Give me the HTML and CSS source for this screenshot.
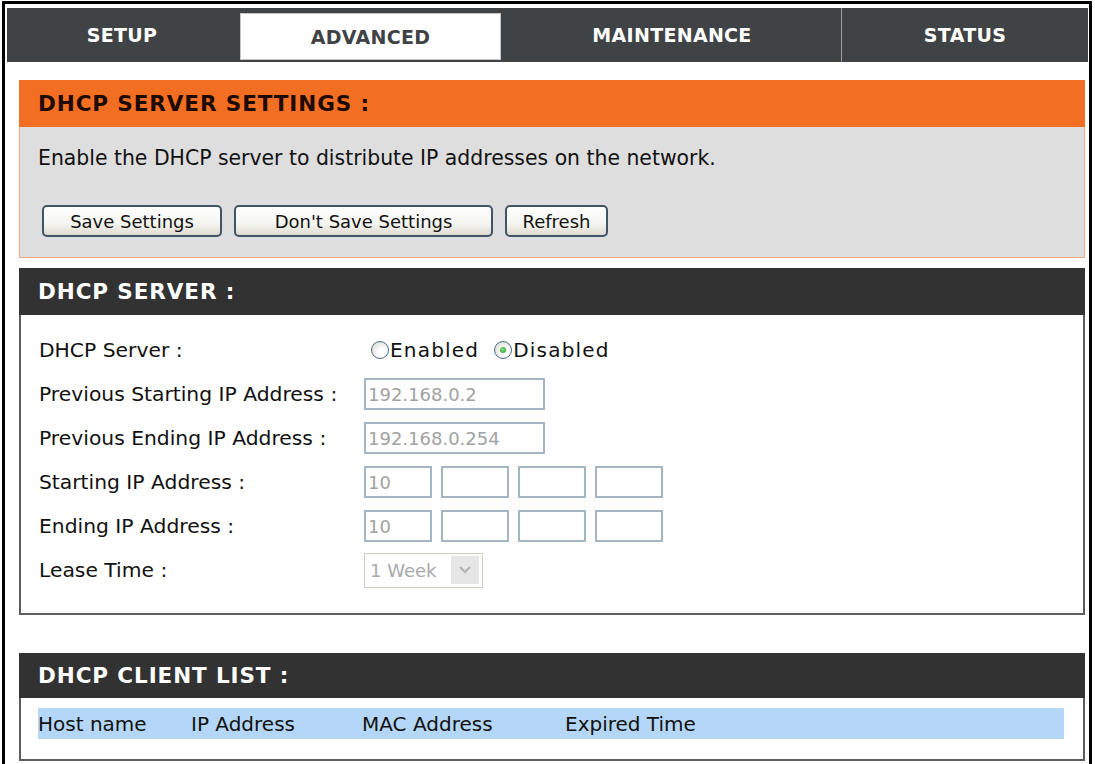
FILE: index.html
```html
<!DOCTYPE html>
<html lang="en">
<head>
    <meta charset="UTF-8">
    <title>DHCP Server</title>
    <link rel="stylesheet" href="styles.css">
</head>
<body>

    <div class="frame">
        <div class="tabs">
            <div class="tab">SETUP</div>
            <div class="tab active">ADVANCED</div>
            <div class="tab">MAINTENANCE</div>
            <div class="tab tab-last">STATUS</div>
        </div>

        <div class="box box-orange">
            <div class="box-head">DHCP SERVER SETTINGS :</div>
            <div class="box-body">
                <p class="intro">Enable the DHCP server to distribute IP addresses on the network.</p>
                <div class="buttons">
                    <button class="btn btn-save">Save Settings</button>
                    <button class="btn btn-cancel">Don't Save Settings</button>
                    <button class="btn btn-refresh">Refresh</button>
                </div>
            </div>
        </div>

        <div class="box box-dark">
            <div class="box-head">DHCP SERVER :</div>
            <div class="box-body form">
                <div class="label">DHCP Server :</div>
                <div class="field">
                    <span class="radio"></span><span class="radio-label">Enabled</span>
                    <span class="radio checked"></span><span class="radio-label">Disabled</span>
                </div>

                <div class="label">Previous Starting IP Address :</div>
                <div class="field"><input class="text wide" type="text" value="192.168.0.2" disabled></div>

                <div class="label">Previous Ending IP Address :</div>
                <div class="field"><input class="text wide" type="text" value="192.168.0.254" disabled></div>

                <div class="label">Starting IP Address :</div>
                <div class="field octets">
                    <input class="text" type="text" value="10" disabled>
                    <input class="text" type="text" value="" disabled>
                    <input class="text" type="text" value="" disabled>
                    <input class="text" type="text" value="" disabled>
                </div>

                <div class="label">Ending IP Address :</div>
                <div class="field octets">
                    <input class="text" type="text" value="10" disabled>
                    <input class="text" type="text" value="" disabled>
                    <input class="text" type="text" value="" disabled>
                    <input class="text" type="text" value="" disabled>
                </div>

                <div class="label">Lease Time :</div>
                <div class="field">
                    <div class="select">
                        <span class="select-text">1 Week</span>
                        <span class="select-arrow">
                            <svg width="14" height="10" viewBox="0 0 14 10"><path d="M2 2 L7 7 L12 2" fill="none" stroke="#b4b4b4" stroke-width="2.2"/></svg>
                        </span>
                    </div>
                </div>
            </div>
        </div>

        <div class="box box-dark clients">
            <div class="box-head">DHCP CLIENT LIST :</div>
            <div class="box-body">
                <div class="client-row">
                    <span class="col-host">Host name</span>
                    <span class="col-ip">IP Address</span>
                    <span class="col-mac">MAC Address</span>
                    <span class="col-time">Expired Time</span>
                </div>
            </div>
        </div>
    </div>

</body>
</html>
```

FILE: styles.css
```css
:root {
    --tab-bg: #404345;
    --orange: #f26e22;
    --peach: #eaa982;
    --panel-gray: #dedede;
    --dark-head: #323232;
    --box-border: #5e5e5e;
    --row-blue: #b5d7f7;
    --input-border: #a4b5c5;
}
body {
    margin: 0;
    background: #fff;
    font-family: "DejaVu Sans", Verdana, sans-serif;
    font-size: 20px;
    color: #111;
}
.frame {
    width: 1090px;
    box-sizing: border-box;
    margin: 1px 0 0 2px;
    border: 3px solid #000;
    padding: 4px 1px 12px 2px;
}

/* top navigation */
.tabs {
    display: grid;
    grid-template-columns: 230px 266px 338px 1fr;
    height: 54px;
    background: var(--tab-bg);
}
.tab {
    display: flex;
    align-items: center;
    justify-content: center;
    color: #fff;
    font-size: 19px;
    font-weight: bold;
    letter-spacing: 0.3px;
}
.tab.active {
    margin: 5px 2px 2px 3px;
    background: #fff;
    border: 1px solid #c4c4c4;
    color: var(--tab-bg);
}
.tab-last {
    border-left: 1px solid #9a9c9d;
}

/* section boxes */
.box {
    margin: 0 3px 0 12px;
}
.box-head {
    height: 47px;
    line-height: 47px;
    padding-left: 19px;
    font-size: 21.5px;
    font-weight: bold;
    letter-spacing: 0.9px;
}
.box-orange {
    margin-top: 18px;
}
.box-orange .box-head {
    background: var(--orange);
    color: #1e0a00;
}
.box-orange .box-body {
    background: var(--panel-gray);
    border: 1px solid var(--peach);
    border-top: none;
    padding: 19px 18px 20px 18px;
}
.intro {
    margin: 0;
    line-height: 24px;
    font-size: 20.4px;
}
.buttons {
    display: flex;
    gap: 12px;
    margin: 35px 0 0 4px;
}
.btn {
    height: 32px;
    padding: 0;
    font-family: "DejaVu Sans", Verdana, sans-serif;
    font-size: 18px;
    color: #111;
    background: linear-gradient(#ffffff, #f4f4f0 60%, #dedbd0);
    border: 2px solid #3f5467;
    border-radius: 5px;
}
.btn-save { width: 180px; }
.btn-cancel { width: 259px; }
.btn-refresh { width: 103px; }

.box-dark {
    margin-top: 10px;
}
.box-dark .box-head {
    background: var(--dark-head);
    color: #fff;
}
.box-dark .box-body {
    border: 2px solid var(--box-border);
    border-top: none;
}

/* server form */
.form {
    display: grid;
    grid-template-columns: 325px 1fr;
    grid-auto-rows: 44px;
    align-items: center;
    padding: 13px 18px 21px 18px;
}
.label {
    font-size: 20.3px;
}
.field {
    display: flex;
    align-items: center;
}
.radio {
    flex: 0 0 18px;
    box-sizing: border-box;
    width: 18px;
    height: 18px;
    border: 1.5px solid #4a6d8e;
    border-radius: 50%;
    background: radial-gradient(circle at 65% 65%, #ffffff 25%, #d6d4ca 95%);
    margin: 0 0 0 7px;
    position: relative;
}
.radio.checked::after {
    content: "";
    position: absolute;
    left: 4.5px;
    top: 4.5px;
    width: 6px;
    height: 6px;
    border-radius: 50%;
    background: radial-gradient(circle at 40% 40%, #7ee07e, #1f9a1f);
}
.radio-label {
    letter-spacing: 1.2px;
    margin: 0 8px 0 1px;
}
.text {
    box-sizing: border-box;
    width: 68px;
    height: 32px;
    padding: 0 2px;
    border: 2px solid var(--input-border);
    background: #fff;
    font-family: "DejaVu Sans", Verdana, sans-serif;
    font-size: 18px;
    color: #a2a2a2;
}
.text.wide {
    width: 181px;
}
.octets {
    gap: 9px;
}
.select {
    box-sizing: border-box;
    width: 119px;
    height: 35px;
    display: flex;
    align-items: center;
    justify-content: space-between;
    border: 1px solid #d0cec4;
    background: #fff;
}
.select-text {
    padding-left: 5px;
    font-size: 18px;
    color: #a9a9a9;
}
.select-arrow {
    width: 28px;
    height: 28px;
    margin-right: 3px;
    display: flex;
    align-items: center;
    justify-content: center;
    background: #e6e6e6;
}

/* client list */
.clients {
    margin-top: 38px;
}
.clients .box-head {
    height: 45px;
    line-height: 45px;
}
.clients .box-body {
    padding: 10px 19px 20px 17px;
}
.client-row {
    display: flex;
    height: 31px;
    align-items: center;
    background: var(--row-blue);
}
.col-host { width: 153px; }
.col-ip { width: 171px; }
.col-mac { width: 203px; }
```
